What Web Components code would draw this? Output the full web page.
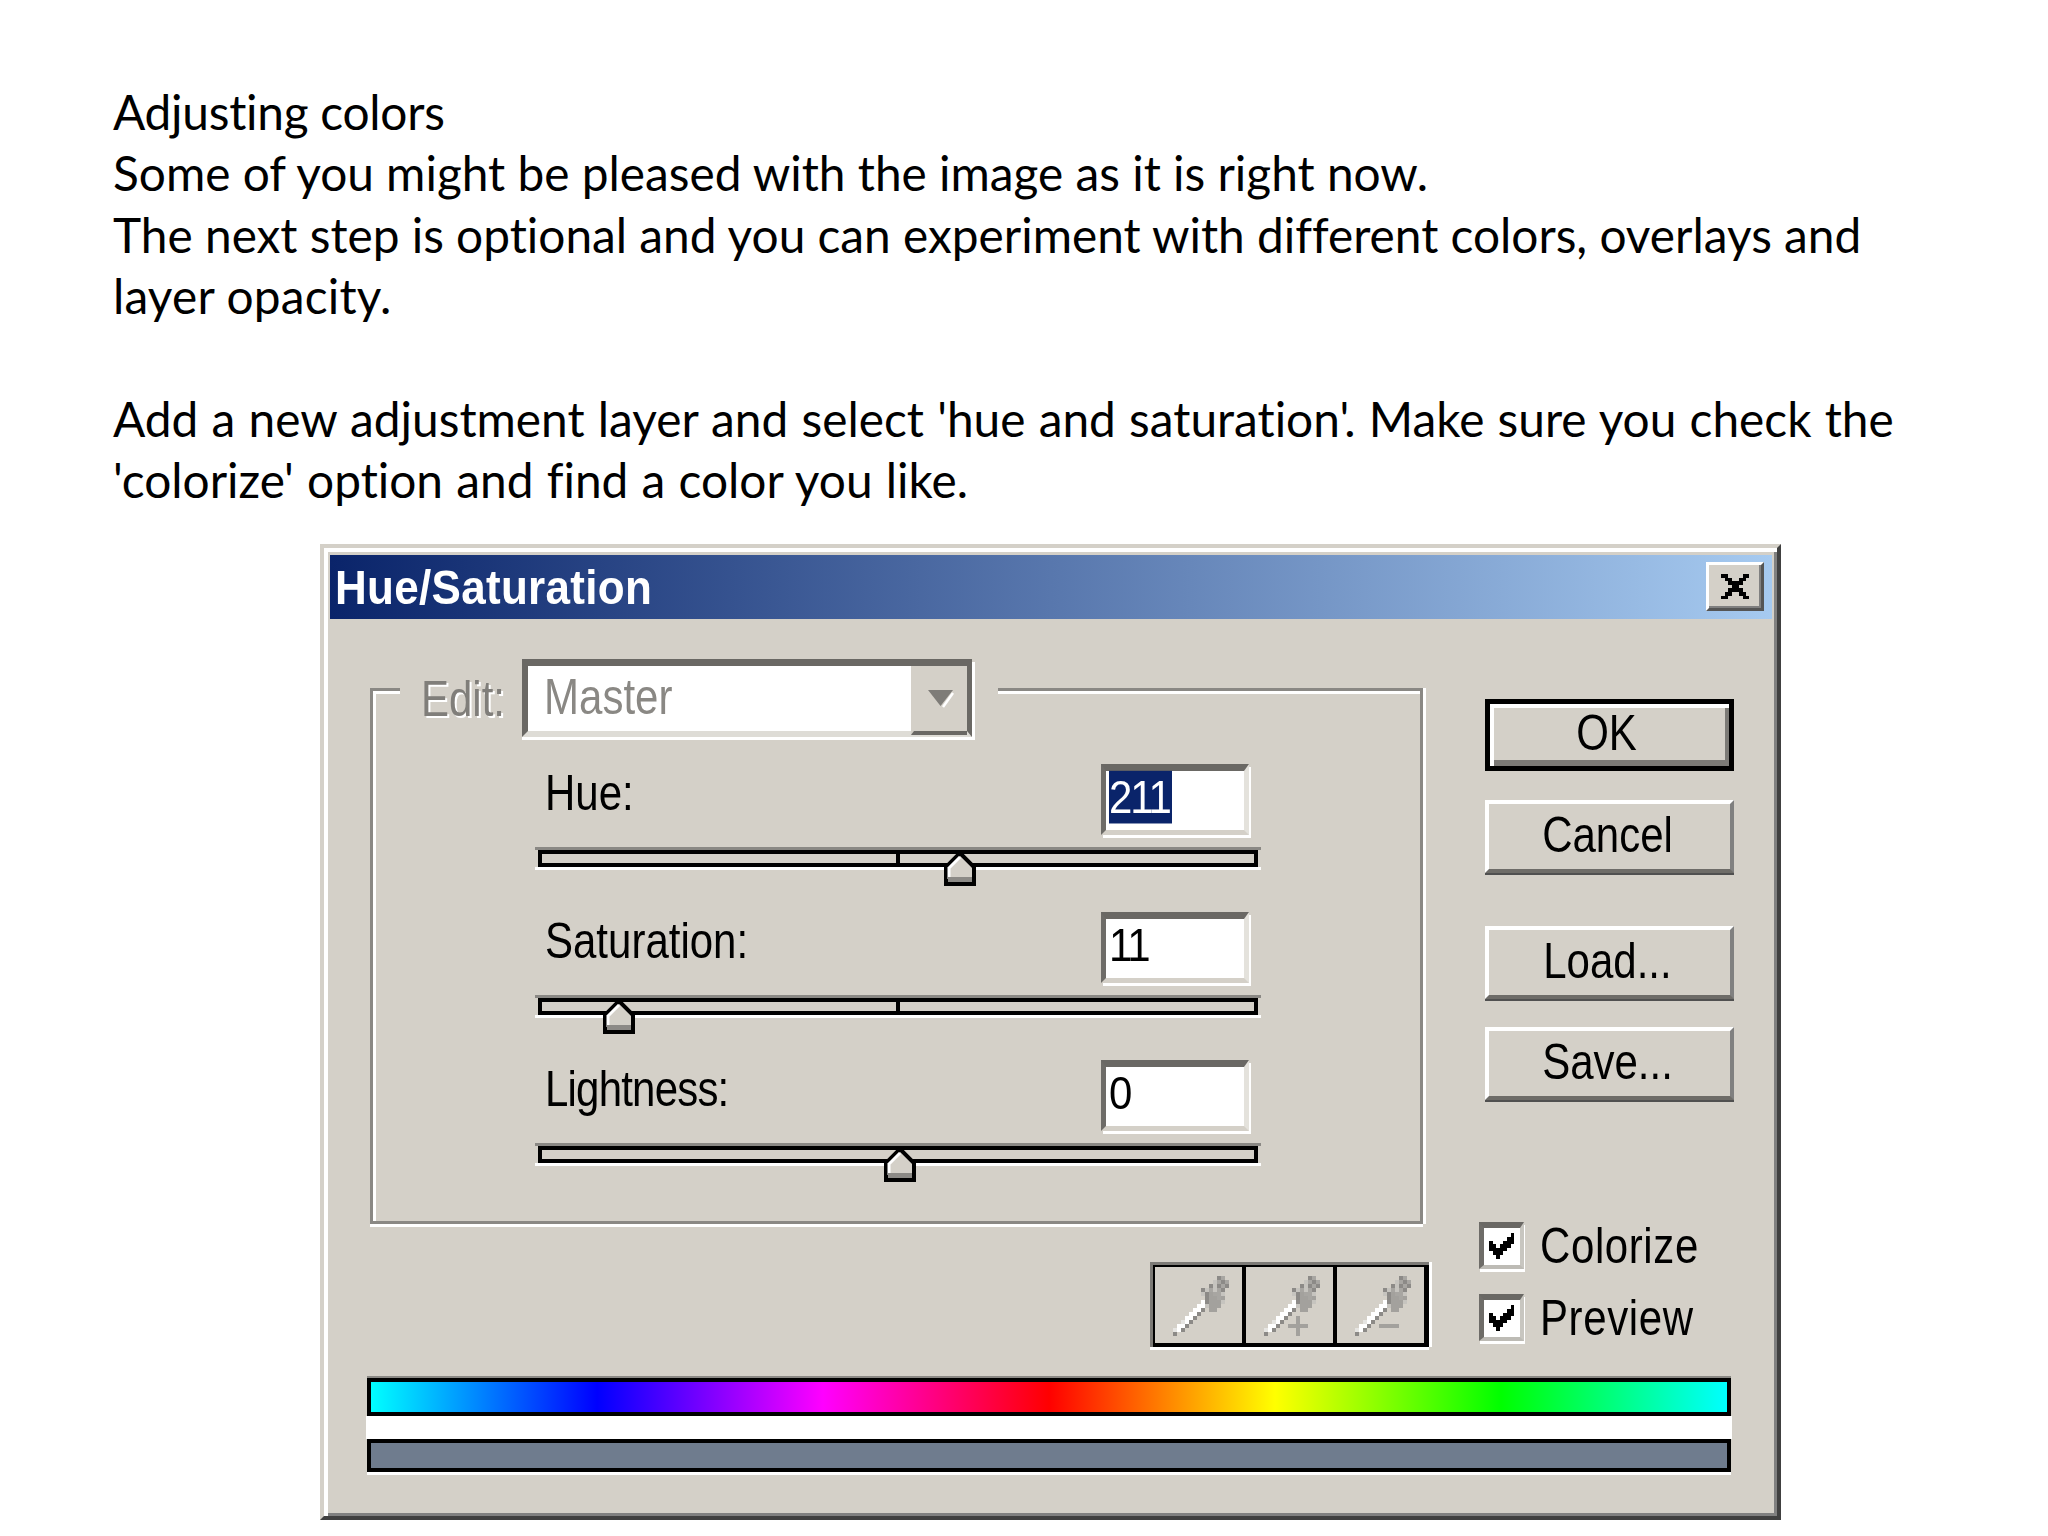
<!DOCTYPE html>
<html><head><meta charset="utf-8"><title>Adjusting colors</title>
<style>
html,body{margin:0;padding:0;background:#fff}
body{width:2048px;height:1536px;overflow:hidden}
</style></head>
<body>
<doc-page>
  <doc-text>
    <p><span style="letter-spacing:-.25px">Adjusting colors</span><br>Some of you might be pleased with the image as it is right now.<br>The next step is optional and you can experiment with different colors, overlays and<br><span style="letter-spacing:.2px">layer opacity.</span></p>
    <p style="word-spacing:1px">Add a new adjustment layer and select 'hue and saturation'. Make sure you check the<br>'colorize' option and find a color you like.</p>
  </doc-text>
  <hs-dialog></hs-dialog>
</doc-page>
<script>
function tpl(css, html){ return '<style>'+css+'</style>'+html; }
class Base extends HTMLElement{
  constructor(){ super(); this.attachShadow({mode:'open'}); this.shadowRoot.innerHTML=this.constructor.markup; }
}
const UI='"Liberation Sans",Arial,sans-serif';

class DocPage extends Base{ static markup=tpl(`:host{display:flex;flex-direction:column;align-items:flex-start;padding:81px 0 0 113px;box-sizing:border-box;width:2048px;height:1536px}`,`<slot></slot>`); }
class DocText extends Base{ static markup=tpl(`:host{display:block;font:47.8px/61.4px Lato,sans-serif;font-variant-ligatures:none;color:#000;white-space:nowrap;margin-bottom:33px}
::slotted(p){margin:0 0 61.4px}
::slotted(p:last-child){margin:0}`,`<slot></slot>`); }

class PxArt extends HTMLElement{
  constructor(){ super(); this.attachShadow({mode:'open'}); }
  connectedCallback(){
    const rows=this.getAttribute('rows').split(',');
    const pw=+this.getAttribute('pw')||4, ph=+this.getAttribute('ph')||pw;
    const pal={X:'#000',g:'#a8a6a2',d:'#8c8a87',w:'#fff',l:'#c6c4bf',s:'#e6e5e2',p:'#a3a19d'};
    let r='';
    rows.forEach((row,y)=>[...row].forEach((c,x)=>{ if(pal[c]) r+=`<rect x="${x}" y="${y}" width="1.02" height="1.02" fill="${pal[c]}"/>`; }));
    const w=rows[0].length,h=rows.length;
    this.shadowRoot.innerHTML=`<style>:host{display:block;line-height:0;filter:blur(.6px)}</style><svg width="${w*pw}" height="${h*ph}" viewBox="0 0 ${w} ${h}" shape-rendering="crispEdges">${r}</svg>`;
  }
}

class TallText extends Base{ static markup=tpl(`:host{display:inline-block;transform:scaleY(var(--sy,1.17));transform-origin:50% 55%;white-space:nowrap}`,`<slot></slot>`); }

class WinTitlebar extends Base{ static markup=tpl(`:host{display:flex;align-items:center;height:64px;margin:7px 5px 0 6px;padding:0 8px 0 5px;
  background:linear-gradient(90deg,#0a246a,#a6caf0);color:#fff;font:bold 44px ${UI};letter-spacing:.3px;--sy:1.1}
.t{flex:1;position:relative;top:1px}
.x{width:58px;height:49px;box-sizing:border-box;background:#d4d0c8;border:3px solid;border-color:#fff #555 #555 #fff;box-shadow:inset -2px -2px 0 #808080;display:flex;align-items:center;justify-content:center}`,
`<span class="t"><tall-text><slot></slot></tall-text></span><div class="x"><px-art pw="3.6" ph="4.2" rows="XX....XX,.XX..XX.,..XXXX..,...XX...,..XXXX..,.XX..XX.,XX....XX"></px-art></div>`); }

class WinButton extends Base{ static markup=tpl(`:host{display:flex;align-items:center;justify-content:center;width:249px;box-sizing:border-box;height:73px;
  background:#d4d0c8;border:4px solid;border-color:#fff #808080 #6e6c68 #fff;box-shadow:0 2px 0 #505050;font:42px ${UI};color:#000;padding-bottom:1px;padding-right:4px}
:host([default]){height:72px;border:none;box-shadow:inset 0 0 0 5px #000,inset 9px 9px 0 #fff,inset -9px -11px 0 #7c7a76;padding:0 6px 1px 0;background:#d4d0c8}`,`<tall-text><slot></slot></tall-text>`); }

class WinInput extends Base{ static markup=tpl(`:host{display:block;width:148px;height:71px;box-sizing:border-box;background:#fff;border-style:solid;border-width:7px 5px 5px 5px;border-color:#6a6864 #e4e2dc #d4d0c8 #6e6c68;box-shadow:2px 3px 0 #fff;padding:4px 0 0 3px;font:42px/46px ${UI};color:#000;letter-spacing:-2px}
tall-text{--sy:1.12}
::slotted(mark){background:#0a246a;color:#fff;padding-right:2px}`,`<tall-text><slot></slot></tall-text>`); }

class WinSlider extends Base{
  static markup=tpl(`:host{display:block;position:relative;width:726px;height:23px;box-sizing:border-box;background:#d4d0c8;
  border-top:3px solid #8a8884;border-bottom:3px solid #fff}
.track{box-sizing:border-box;height:17px;border:4px solid #000;margin:0 3px 0 3px;position:relative;background:#d4d0c8}
.tick{position:absolute;top:0;bottom:0;left:50%;width:4px;margin-left:-2px;background:#000}
:host([notick]) .tick{display:none}
.thumb{position:absolute;top:2px;width:32px;height:34px;margin-left:-16px}`,
`<div class="track"><div class="tick"></div></div><svg class="thumb" viewBox="0 0 32 34"><path d="M2 32V15L16 1 30 15V32Z" fill="#d4d0c8" stroke="#000" stroke-width="4" stroke-linejoin="miter"/><path d="M5 16L16 5 M5 15V27" stroke="#fff" stroke-width="3" fill="none"/><rect x="4" y="25" width="24" height="5" fill="#8c8a86"/></svg>`);
  connectedCallback(){ this.shadowRoot.querySelector('.thumb').style.left=this.getAttribute('at')+'px'; }
}

class WinCheck extends Base{ static markup=tpl(`:host{display:flex;align-items:center;gap:16px;font:42px ${UI};color:#000;height:47px}
.b{box-sizing:border-box;width:45px;height:47px;background:#fff;border-style:solid;border-width:6px 4px 4px 5px;border-color:#6a6864 #c8c6c0 #bdbbb5 #6e6c68;box-shadow:1px 3px 0 #fff;display:flex;align-items:center;justify-content:center;flex:none}
span{position:relative;top:2px;letter-spacing:.6px}`,
`<div class="b"><px-art pw="3.6" ph="3.7" rows="......X,.....XX,X...XXX,XX.XXX.,XXXXX..,.XXX...,..X...."></px-art></div><span><tall-text><slot></slot></tall-text></span>`); }

const DROP=[
"...........dg.",
"..........lgdg",
".........dldgd",
".......dlglgd.",
".......ldpggl.",
"........dppgp.",
".......wdpppl.",
"......wwlppp..",
".....wwd.pp...",
"....wwd.......",
"...wwd........",
"..swd.........",
".wwd..........",
"swd...........",
"d............."];
class EyeDropper extends Base{
  static markup=tpl(`:host{display:flex;align-items:center;justify-content:center;flex:1;background:#d4d0c8;position:relative}
  px-art{margin:2px 0 0 12px}`,``);
  connectedCallback(){
    const m=this.getAttribute('mark');
    let rows=DROP.map(r=>r+"..");
    const set=(y,x)=>{rows[y]=rows[y].slice(0,x)+'p'+rows[y].slice(x+1)};
    if(m==='plus'){ for(let i=0;i<5;i++){set(10+i,8);set(12,6+i);} }
    if(m==='minus'){ for(let i=0;i<5;i++){set(12,6+i);} }
    const a=document.createElement('px-art');
    a.setAttribute('pw','4');a.setAttribute('ph','4');a.setAttribute('rows',rows.join(','));
    this.shadowRoot.appendChild(a);
  }
}
class DropperGroup extends Base{ static markup=tpl(`:host{display:flex;width:279px;height:85px;box-sizing:border-box;background:#000;gap:4px;padding:5px 5px 4px 5px;box-shadow:inset 0 3px 0 #7c7a76,inset 3px 0 0 #7c7a76,0 3px 0 #fff,3px 0 0 #fff}`,`<slot></slot>`); }

class SpectrumBars extends Base{ static markup=tpl(`:host{display:flex;flex-direction:column;margin:31px 0 0 -4px;width:1366px}
.bar{height:30px;border:4px solid #000;box-shadow:0 -2px 0 #8a8884;box-sizing:content-box;margin:0 0 0 1px;width:1356px}
.rain{background:linear-gradient(90deg,#0ff,#00f,#f0f,#f00,#ff0,#0f0,#0ff)}
.gap{height:23px;background:#fff}
.gray{background:#6f7c8e;height:25px;box-shadow:0 3px 0 #fff}`,
`<div class="bar rain"></div><div class="gap"></div><div class="bar gray"></div>`); }

class GroupBox extends Base{ static markup=tpl(`:host{display:block;box-sizing:border-box;width:1053px;height:536px;border:3px solid #8a8884;box-shadow:inset 3px 3px 0 #fff,0 3px 0 #fff,3px 0 0 #fff;padding:0 0 0 27px}
.legend{display:flex;align-items:center;width:598px;height:78px;margin:-32px 0 0;background:#d4d0c8;padding-left:21px;box-sizing:border-box;gap:17px;color:#807e7a;font:42px ${UI};text-shadow:2px 2px 0 #fff}
.rows{display:flex;flex-direction:column;gap:42px;margin:27px 0 0 135px}`,
`<div class="legend"><slot name="legend"></slot></div><div class="rows"><slot></slot></div>`); }

class SliderRow extends Base{ static markup=tpl(`:host{display:block;width:726px}
.top{display:flex;align-items:center;justify-content:space-between;height:71px;padding:0 12px 0 10px;box-sizing:border-box;margin-bottom:12px;font:42px ${UI};color:#000}
span{position:relative;top:-5px}`,
`<div class="top"><span><tall-text><slot name="label"></slot></tall-text></span><slot name="input"></slot></div><slot name="slider"></slot>`); }

class WinCombo extends Base{ static markup=tpl(`:host{display:flex;width:450px;height:78px;box-sizing:border-box;background:#fff;border-style:solid;border-width:7px 5px 6px 6px;border-color:#6a6864 #6a6864 #dedcd6 #6a6864;box-shadow:3px 3px 0 #fff,0 3px 0 #fff;align-items:stretch;font:42px ${UI};color:#8a8884;text-shadow:none}
.v{flex:1;padding:5px 0 0 16px;line-height:54px}
.btn{width:56px;background:#d4d0c8;border-left:3px solid #d4d0c8;border-bottom:4px solid #6a6864;margin-bottom:-4px;display:flex;align-items:center;justify-content:center;box-sizing:border-box}
svg{display:block}`,
`<div class="v"><tall-text><slot></slot></tall-text></div><div class="btn"><svg width="30" height="22" viewBox="0 0 30 22"><path d="M2 3H27L14.5 19Z" fill="#7e7c78"/><path d="M27 6L17 20" stroke="#fff" stroke-width="2.5"/></svg></div>`); }

class HsDialog extends Base{ static markup=tpl(`:host{display:block;box-sizing:border-box;width:1461px;margin-left:207px;height:976px;background:#d4d0c8;border-style:solid;border-width:4px;border-color:#d4d0c8 #404040 #404040 #d4d0c8;box-shadow:inset 4px 4px 0 #fff,inset -3px -3px 0 #808080;font-family:${UI}}
.body{display:grid;grid-template-columns:1053px 1fr;padding:69px 0 0 46px}
.left{display:flex;flex-direction:column}
.droppers{display:flex;justify-content:flex-end;margin:38px -6px 0 0}
.right{display:flex;flex-direction:column;align-items:flex-start;padding:11px 0 0 62px}
.cancel{margin-top:29px}.load{margin-top:53px}.save{margin-top:28px}
.checks{display:flex;flex-direction:column;gap:25px;margin:122px 0 0 -6px}
.edit{white-space:nowrap;position:relative;top:2px}`,
`<win-titlebar>Hue/Saturation</win-titlebar>
<div class="body">
 <div class="left">
  <group-box>
    <span slot="legend" class="edit"><tall-text>Edit:</tall-text></span>
    <win-combo slot="legend">Master</win-combo>
    <slider-row><span slot="label">Hue:</span><win-input slot="input"><mark>211</mark></win-input><win-slider slot="slider" at="425"></win-slider></slider-row>
    <slider-row><span slot="label">Saturation:</span><win-input slot="input">11</win-input><win-slider slot="slider" at="84"></win-slider></slider-row>
    <slider-row><span slot="label" style="letter-spacing:-.8px">Lightness:</span><win-input slot="input">0</win-input><win-slider slot="slider" notick at="365"></win-slider></slider-row>
  </group-box>
  <div class="droppers"><dropper-group><eye-dropper></eye-dropper><eye-dropper mark="plus"></eye-dropper><eye-dropper mark="minus"></eye-dropper></dropper-group></div>
 </div>
 <div class="right">
  <win-button default>OK</win-button>
  <win-button class="cancel">Cancel</win-button>
  <win-button class="load">Load...</win-button>
  <win-button class="save">Save...</win-button>
  <div class="checks"><win-check>Colorize</win-check><win-check>Preview</win-check></div>
 </div>
</div>
<div style="padding-left:46px"><spectrum-bars></spectrum-bars></div>`); }

const defs={'doc-page':DocPage,'doc-text':DocText,'px-art':PxArt,'tall-text':TallText,'win-titlebar':WinTitlebar,'win-button':WinButton,'win-input':WinInput,'win-slider':WinSlider,'win-check':WinCheck,'eye-dropper':EyeDropper,'dropper-group':DropperGroup,'spectrum-bars':SpectrumBars,'group-box':GroupBox,'slider-row':SliderRow,'win-combo':WinCombo,'hs-dialog':HsDialog};
for(const k in defs) customElements.define(k,defs[k]);
</script>
</body></html>
